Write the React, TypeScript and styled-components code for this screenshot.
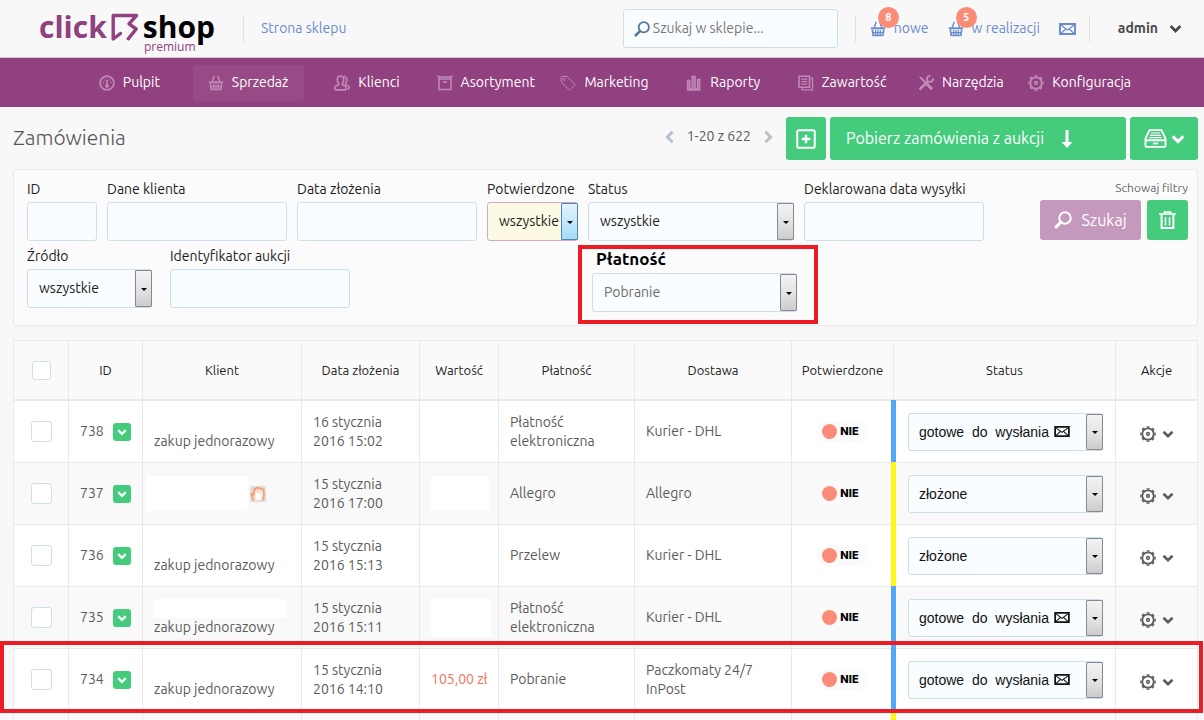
import React from 'react';
import styled, { createGlobalStyle, css } from 'styled-components';

const colors = {
  purple: '#914080',
  purpleActive: '#974a86',
  purpleSoft: '#c598bd',
  green: '#44cb7c',
  coral: '#fa8b76',
  link: '#6a8ccb',
  text: '#5b5b5b',
  border: '#e9e9e9',
  fieldBorder: '#cfdeec',
  fieldBg: '#f9fdff',
  mark: '#ed1c24',
};

const GlobalStyle = createGlobalStyle`
  * { box-sizing: border-box; }
  html { scrollbar-width: none; }
  body {
    margin: 0;
    background: #f8f8f8;
    color: ${colors.text};
    font-family: "Ubuntu", "Noto Sans", sans-serif;
    font-size: 14px;
    line-height: 19px;
  }
  button, input, select { font: inherit; color: inherit; }
  button { cursor: pointer; border: 0; padding: 0; background: none; }
  a { color: inherit; text-decoration: none; }
  svg { display: block; flex: none; }
`;

/* ---------- icons ---------- */

type IconProps = { size?: number; color?: string };

const Icon = ({ size = 16, color = 'currentColor', children }: IconProps & { children: React.ReactNode }) => (
  <svg width={size} height={size} viewBox="0 0 16 16" fill="none" stroke={color} strokeWidth="1.5" aria-hidden="true">
    {children}
  </svg>
);

const GaugeIcon = () => (
  <Icon>
    <circle cx="8" cy="8" r="6.900" strokeWidth="1.700" />
    <path d="M8 5v5" strokeWidth="1.600" />
    <circle cx="8" cy="10.900" r="1.900" fill="currentColor" stroke="none" />
    <path d="M3.400 7.600h1.300M11.300 7.600h1.300M4.800 4.600l.9.8M11.200 4.600l-.9.8M8 3.200v1" strokeWidth="1.200" />
  </Icon>
);
const BasketIcon = () => (
  <Icon>
    <path d="M.800 7.300h14.400" strokeWidth="2" />
    <path d="M2.300 8.500l.9 6h9.600l.9-6" strokeWidth="1.700" />
    <path d="M4.100 7L6.300.8M11.900 7L9.700.8" strokeWidth="1.400" />
    <path d="M5.700 9v5M8 9v5M10.300 9v5M3 11.600h10" strokeWidth="1.200" />
  </Icon>
);
const UsersIcon = () => (
  <Icon>
    <path d="M6.500 1.100c2.200 0 3.300 1.500 3.300 3.700 0 1.800-.6 3-1.300 3.800v1.100l2.600 1.300c.9.500 1.200 1.200 1.200 2.100 0 1-.6 1.700-1.600 1.700H2.400c-1 0-1.600-.7-1.600-1.700 0-.9.3-1.600 1.200-2.100l2.600-1.300V8.600C3.900 7.800 3.200 6.600 3.200 4.800c0-2.200 1.100-3.700 3.300-3.700z" strokeWidth="1.700" />
    <path d="M10 1.200c1.900.2 2.900 1.600 2.900 3.600 0 1.700-.6 2.900-1.300 3.700v.8l2.300 1.300c.8.400 1.200 1.100 1.200 2 0 1-.5 1.900-1.500 1.900" strokeWidth="1.500" />
  </Icon>
);
const BoxIcon = () => (
  <Icon>
    <path d="M.3.600l1.900 1.500h11.600L15.700.600M2 2.200v12.400h12V2.200M1.200 4h13.600" />
    <path d="M6 7h4" strokeWidth="1.600" />
  </Icon>
);
const TagIcon = () => (
  <Icon>
    <path d="M1.200 2.600c0-.8.500-1.300 1.300-1.300l4.600.2 7.500 7.400c.4.400.4.900 0 1.300l-4.400 4.400c-.4.400-.9.400-1.300 0L1.400 7.200z" strokeWidth="1" />
    <circle cx="4.300" cy="4.400" r="1" strokeWidth="1" />
  </Icon>
);
const BarsIcon = () => (
  <Icon>
    <path d="M1.500 5.500h2.300v8h2.300V1.500h3v12h2.400v-9h2.300V15H1.500z" fill="currentColor" fillOpacity=".7" strokeWidth="1.300" />
  </Icon>
);
const PagesIcon = () => (
  <Icon>
    <path d="M1 1.200h10.500v11H1z" />
    <path d="M12.500 3.500h2v11.300H4.200v-2" strokeWidth="1.300" />
    <path d="M3.300 4.200h6M3.300 6.700h6M3.300 9.200h6" strokeWidth="1.200" />
  </Icon>
);
const ToolsIcon = () => (
  <Icon>
    <path d="M1 1.600l2.500.6 10.800 10.600-1.300 1.500L2.200 3.700z" fill="currentColor" stroke="none" />
    <path d="M9 9l5 5.200" strokeWidth="3" />
    <path d="M1.500 14.500l9-8.700" strokeWidth="2.600" />
    <path d="M14.900 3.200a3 3 0 1 1-2.500-2.300" strokeWidth="1.900" />
  </Icon>
);
const GearIcon = () => (
  <Icon>
    <circle cx="8" cy="8" r="5.700" strokeWidth="1.800" />
    <circle cx="8" cy="8" r="7.100" strokeWidth="1.400" strokeDasharray="3.200 2.376" strokeDashoffset="1.600" />
    <circle cx="8" cy="8" r="1.400" strokeWidth="1.500" />
  </Icon>
);
const SearchIcon = ({ size = 16 }: IconProps) => (
  <Icon size={size}>
    <circle cx="9.800" cy="6.200" r="5.100" strokeWidth="1.800" />
    <path d="M6.200 9.900L1 15" strokeWidth="2.600" />
  </Icon>
);
const ChevronIcon = ({ size = 12, dir = 'down' }: IconProps & { dir?: 'down' | 'left' | 'right' }) => {
  const d = { down: 'M2 5l6 6 6-6', left: 'M11 2L5 8l6 6', right: 'M5 2l6 6-6 6' }[dir];
  return (
    <Icon size={size}>
      <path d={d} strokeWidth="3.400" />
    </Icon>
  );
};
const EnvelopeIcon = ({ size = 16 }: IconProps) => (
  <svg width={size + 1} height={size - 4} viewBox="0 0 17 12" fill="none" stroke="currentColor" aria-hidden="true">
    <path d="M1 1h15v10H1z" strokeWidth="1.900" />
    <path d="M2 2l6.500 5L15 2M2.200 10.200l4.300-4M14.800 10.200l-4.300-4" strokeWidth="1.200" />
  </svg>
);
const PlusBoxIcon = () => (
  <Icon size={20}>
    <rect x="1" y="1" width="14" height="14" rx="1.500" strokeWidth="1.600" />
    <path d="M8 4.600v6.800M4.600 8h6.800" strokeWidth="1.900" />
  </Icon>
);
const ArrowDownIcon = () => (
  <svg width="12" height="18" viewBox="0 0 12 18" fill="currentColor" aria-hidden="true">
    <path d="M4.500 0h3v12H11.500L6 18 .5 12h4z" />
  </svg>
);
const DrawerIcon = () => (
  <svg width="23" height="19" viewBox="0 0 23 19" fill="none" stroke="currentColor" aria-hidden="true">
    <path d="M5.500 1.100h12l4 8.400v7.200c0 .7-.5 1.200-1.200 1.200H2.700c-.7 0-1.200-.5-1.200-1.200V9.500z" strokeWidth="1.900" />
    <path d="M1.500 11.300h20" strokeWidth="2" />
    <path d="M7 4h9M6 6.300h11M5.200 8.600h12.600" strokeWidth="1.200" />
    <path d="M9 14.500h5" strokeWidth="1.800" />
  </svg>
);
const TrashIcon = () => (
  <svg width="17" height="18" viewBox="0 0 17 18" fill="none" stroke="currentColor" aria-hidden="true">
    <path d="M0 3h17M5.500 2.500V1h6v1.500" strokeWidth="1.700" />
    <path d="M2.600 3.500V17h11.800V3.500" strokeWidth="2" />
    <path d="M6.500 6v8.500M10.500 6v8.500" strokeWidth="1.500" />
  </svg>
);
const AllegroIcon = () => (
  <svg width="16" height="16" viewBox="0 0 16 16" aria-label="Allegro">
    <rect width="16" height="16" rx="1.500" fill="#dedede" />
    <path
      d="M4 14.500C2.600 13 2.200 11.200 2.400 9.800L1.400 8.600c-.4-.8.500-1.500 1.200-.9l1.300 1L3.700 4.200c0-1 1-1.400 1.500-.7C5.400 1.700 7 1.400 7.500 2.300c.5-1 2.200-.8 2.500.3.700-.7 2-.2 2 .9.900-.5 1.900.1 1.800 1.200-.2 3.300 1.100 6.700-1.500 9.800"
      fill="#f6e4d8"
      stroke="#fb9a63"
      strokeWidth="1.500"
    />
    <path d="M5.500 8c1-1.500 4-1.500 5.500.5v5H6z" fill="#fff" />
  </svg>
);
const LogoMark = () => (
  <svg width="28" height="29" viewBox="0 0 28 29" fill="none" stroke={colors.purple} strokeWidth="3.400" strokeLinejoin="round" strokeLinecap="round" aria-hidden="true">
    <path d="M9.500 20.500L2.200 26V2.500h23.300l-7.500 8.300 7.200 5.200-8 9.800" />
  </svg>
);

/* ---------- top bar ---------- */

const TopBar = styled.header`
  display: flex;
  align-items: center;
  height: 58px;
  padding: 0 22px 0 39px;
  border-bottom: 1px solid #d9c9d6;
`;
const Logo = styled.a`
  position: relative;
  display: flex;
  align-items: center;
  gap: 4px;
  width: 204px;
  padding-bottom: 3px;
  font-family: "Open Sans", "Noto Sans", sans-serif;
  font-size: 30px;
  line-height: 44px;
  font-weight: 700;
  color: #000;
`;
const LogoClick = styled.span`
  color: ${colors.purple};
`;
const LogoTag = styled.span`
  position: absolute;
  left: 105px;
  bottom: -2px;
  font-size: 12px;
  line-height: 14px;
  font-weight: 400;
  color: ${colors.purple};
`;
const Divider = styled.span`
  width: 1px;
  height: 27px;
  background: #e2e2e2;
`;
const TopLink = styled.a<{ $left: number }>`
  position: relative;
  display: flex;
  align-items: center;
  gap: 8px;
  margin-left: ${(p) => p.$left}px;
  color: ${colors.link};
  white-space: nowrap;
`;
const Count = styled.span`
  position: absolute;
  left: 8px;
  top: -12px;
  width: 21px;
  height: 21px;
  border-radius: 50%;
  background: ${colors.coral};
  color: #fff;
  font-size: 11px;
  line-height: 21px;
  font-weight: 700;
  text-align: center;
`;
const SearchBox = styled.label`
  display: flex;
  align-items: center;
  gap: 3px;
  width: 215px;
  height: 39px;
  margin: 0 17px 0 auto;
  padding: 0 10px;
  border: 1px solid ${colors.fieldBorder};
  border-radius: 3px;
  background: ${colors.fieldBg};
  color: #5a7890;
`;
const SearchInput = styled.input`
  flex: 1;
  min-width: 0;
  border: 0;
  padding: 0;
  outline: 0;
  background: transparent;
  &::placeholder { color: #7a7a7a; opacity: 1; }
`;
const UserButton = styled.button`
  display: flex;
  align-items: center;
  gap: 11px;
  margin-left: 28px;
  color: #4a4a4a;
  font-weight: 700;
`;

/* ---------- navigation ---------- */

const Nav = styled.nav`
  display: grid;
  grid-template-columns: repeat(9, minmax(0, 1fr));
  align-items: center;
  height: 49px;
  padding: 0 65px 0 70px;
  background: ${colors.purple};
`;
const NavItem = styled.a<{ $active?: boolean }>`
  justify-self: center;
  display: flex;
  align-items: center;
  gap: 8px;
  height: 36px;
  padding: 0 15px;
  border-radius: 4px;
  color: #fff;
  white-space: nowrap;
  background: ${(p) => (p.$active ? colors.purpleActive : 'transparent')};
  svg { color: #c08ab6; }
`;

/* ---------- page heading ---------- */

const Main = styled.main`
  padding: 10px 6px 0 13px;
`;
const Heading = styled.div`
  display: flex;
  align-items: center;
  gap: 4px;
  height: 43px;
`;
const Title = styled.h1`
  flex: 1;
  margin: 0;
  padding-bottom: 4px;
  font-size: 21px;
  line-height: 24px;
  font-weight: 300;
  color: #555;
`;
const Pager = styled.div`
  display: flex;
  align-items: center;
  gap: 10px;
  margin-right: 7px;
  padding-bottom: 4px;
`;
const PagerButton = styled.button`
  color: #b4c2cc;
`;
const Button = styled.button<{ $w: number; $h: number; $tone?: 'green' | 'soft'; $start?: boolean }>`
  display: flex;
  align-items: center;
  justify-content: ${(p) => (p.$start ? 'flex-start' : 'center')};
  width: ${(p) => p.$w}px;
  height: ${(p) => p.$h}px;
  padding: ${(p) => (p.$start ? '0 16px' : '0')};
  border-radius: 3px;
  background: ${(p) => (p.$tone === 'soft' ? colors.purpleSoft : colors.green)};
  color: #fff;
  font-size: 16px;
  gap: ${(p) => (p.$start ? '17px' : p.$tone === 'soft' ? '9px' : '4px')};
  white-space: nowrap;
`;

/* ---------- filters ---------- */

const Filters = styled.form`
  display: flex;
  justify-content: space-between;
  margin-top: 9px;
  padding: 10px 9px 1px 13px;
  border: 1px solid ${colors.border};
  border-radius: 3px;
  background: #fbfbfb;
`;
const FilterRows = styled.div`
  display: flex;
  flex-direction: column;
  gap: 6px;
`;
const FilterRow = styled.div<{ $gap: number }>`
  display: flex;
  align-items: flex-start;
  gap: ${(p) => p.$gap}px;
`;
const Field = styled.label<{ $w: number; $strong?: boolean }>`
  display: flex;
  flex-direction: column;
  width: ${(p) => p.$w}px;
  gap: ${(p) => (p.$strong ? 5 : 3)}px;
  color: #1c1c1c;
  white-space: nowrap;
`;
const StrongLabel = styled.span`
  padding-left: 4px;
  font-size: 17px;
  font-weight: 700;
  color: #000;
`;
const fieldBox = css`
  width: 100%;
  height: 39px;
  border: 1px solid ${colors.fieldBorder};
  border-radius: 3px;
  background: ${colors.fieldBg};
`;
const TextInput = styled.input`
  ${fieldBox}
  padding: 0 11px;
`;
const SelectWrap = styled.span<{ $hot?: boolean }>`
  position: relative;
  display: block;
  width: 100%;
  &::after {
    content: '';
    position: absolute;
    top: 1px;
    right: 0;
    bottom: 1px;
    width: 15px;
    border: 1px solid ${(p) => (p.$hot ? '#4d84b5' : '#858a90')};
    border-radius: 1px;
    background: ${(p) => (p.$hot ? 'linear-gradient(#e3f4fd, #bde6fb 60%, #a4dcf6)' : 'linear-gradient(#f3f3f3, #e0e0e0 60%, #cccccc)')};
    pointer-events: none;
  }
  &::before {
    content: '';
    position: absolute;
    z-index: 1;
    top: 50%;
    right: 5px;
    margin-top: -1px;
    border: 3px solid transparent;
    border-top-color: #000;
    border-bottom-width: 0;
    pointer-events: none;
  }
`;
const Select = styled.select<{ $hot?: boolean; $muted?: boolean; $cell?: boolean }>`
  ${fieldBox}
  appearance: none;
  display: block;
  padding: 0 15px 0 11px;
  color: ${(p) => (p.$muted ? '#6c6c6c' : '#1c1c1c')};
  ${(p) => p.$hot && css`background: #fdfae3; border-color: #d3a8c9;`}
  ${(p) => p.$cell && css`
    height: 38px;
    padding: 2px 15px 0 10px;
    font-family: "Liberation Sans", Arial, sans-serif;
    color: #111;
  `}
`;
const SelectMail = styled.span`
  position: absolute;
  left: 146px;
  top: 13px;
  color: #111;
  pointer-events: none;
`;
const Marked = styled.div`
  margin: -2px 0 0 210px;
  padding: 0 17px 8px 10px;
  border: 4px solid ${colors.mark};
`;
const FilterActions = styled.div`
  display: flex;
  flex-direction: column;
  align-items: flex-end;
  font-size: 12px;
  line-height: 16px;
`;
const ActionButtons = styled.div`
  display: flex;
  gap: 6px;
  margin-top: 4px;
`;
const HideLink = styled.a`
  color: #666;
`;

/* ---------- orders table ---------- */

const Table = styled.table`
  width: 100%;
  margin-top: 14px;
  table-layout: fixed;
  border-collapse: separate;
  border-spacing: 0;
  border: 1px solid ${colors.border};
  border-bottom: 0;
`;
const HeadCell = styled.th`
  height: 60px;
  padding: 0;
  border-right: 1px solid ${colors.border};
  border-bottom: 2px solid ${colors.border};
  background: #fafafa;
  color: #1c1c1c;
  font-size: 13px;
  font-weight: 400;
  text-align: center;
  &:last-child { border-right: 0; }
`;
const Row = styled.tr<{ $marked?: boolean }>`
  position: relative;
  background: #fff;
  &:nth-child(even) { background: #f9f9f9; }
  ${(p) => p.$marked && css`
    &::after {
      content: '';
      position: absolute;
      z-index: 2;
      inset: -8px -6px -2px -14px;
      border: 4px solid ${colors.mark};
      pointer-events: none;
    }
  `}
`;
const Cell = styled.td<{ $pad?: string }>`
  height: 62px;
  padding: ${(p) => p.$pad ?? '0 4px 0 11px'};
  border-right: 1px solid ${colors.border};
  border-bottom: 1px solid ${colors.border};
  text-align: left;
  &:last-child { border-right: 0; }
`;
const StatusCell = styled(Cell)<{ $stripe: string }>`
  position: relative;
  &::before {
    content: '';
    position: absolute;
    left: -3px;
    top: -1px;
    bottom: 0;
    width: 5px;
    background: ${(p) => p.$stripe};
  }
`;
const Checkbox = styled.input<{ $s: number }>`
  appearance: none;
  display: block;
  width: ${(p) => p.$s}px;
  height: ${(p) => p.$s}px;
  margin: 0 auto;
  border: 1px solid ${colors.fieldBorder};
  border-radius: 3px;
  background: #fff;
`;
const Inline = styled.span<{ $gap: number }>`
  display: flex;
  align-items: center;
  gap: ${(p) => p.$gap}px;
`;
const Expand = styled.button`
  display: flex;
  align-items: center;
  justify-content: center;
  width: 18px;
  height: 18px;
  border-radius: 3px;
  background: ${colors.green};
  color: #fff;
`;
const Blank = styled.span<{ $w: number; $h: number }>`
  display: block;
  width: ${(p) => p.$w}px;
  height: ${(p) => p.$h}px;
  background: #fff;
`;
const Price = styled.span`
  color: #f8705a;
  white-space: nowrap;
`;
const Pill = styled.span`
  display: flex;
  align-items: center;
  gap: 3px;
  width: max-content;
  height: 21px;
  margin: 0 auto;
  padding: 0 9px 0 5px;
  border-radius: 10px;
  background: #fafafa;
  color: #000;
  font-family: Inter, "Noto Sans", sans-serif;
  font-size: 11px;
  font-weight: 800;
`;
const Dot = styled.span`
  width: 15px;
  height: 15px;
  border-radius: 50%;
  background: ${colors.coral};
`;
const ActionButton = styled.button`
  display: flex;
  align-items: center;
  gap: 6px;
  margin: 4px auto 0;
  color: #5b5b5b;
`;

const navItems: { label: string; icon: React.ReactNode; active?: boolean }[] = [
  { label: 'Pulpit', icon: <GaugeIcon /> },
  { label: 'Sprzedaż', icon: <BasketIcon />, active: true },
  { label: 'Klienci', icon: <UsersIcon /> },
  { label: 'Asortyment', icon: <BoxIcon /> },
  { label: 'Marketing', icon: <TagIcon /> },
  { label: 'Raporty', icon: <BarsIcon /> },
  { label: 'Zawartość', icon: <PagesIcon /> },
  { label: 'Narzędzia', icon: <ToolsIcon /> },
  { label: 'Konfiguracja', icon: <GearIcon /> },
];

const columnWidths = [55, 74, 159, 118, 79, 136, 157, 102, 222, 81];
const columnNames = ['ID', 'Klient', 'Data złożenia', 'Wartość', 'Płatność', 'Dostawa', 'Potwierdzone', 'Status', 'Akcje'];

const oneTime = 'zakup jednorazowy';
const ready = 'gotowe\u00a0 do\u00a0 wysłania';

type Order = {
  id: number;
  client: React.ReactNode;
  clientPad?: string;
  day: string;
  time: string;
  value?: React.ReactNode;
  payment: string;
  delivery: string;
  ready: boolean;
  stripe: string;
  marked?: boolean;
};

const blue = '#52a8f7';
const yellow = '#fff714';

const orders: Order[] = [
  { id: 738, client: <><br />{oneTime}</>, day: '16 stycznia', time: '15:02', payment: 'Płatność elektroniczna', delivery: 'Kurier - DHL', ready: true, stripe: blue },
  {
    id: 737,
    client: <Inline $gap={2}><Blank $w={102} $h={35} /><AllegroIcon /></Inline>,
    clientPad: '0 0 0 3px',
    day: '15 stycznia', time: '17:00', value: <Blank $w={58} $h={35} />, payment: 'Allegro', delivery: 'Allegro', ready: false, stripe: yellow,
  },
  { id: 736, client: <><br />{oneTime}</>, day: '15 stycznia', time: '15:13', payment: 'Przelew', delivery: 'Kurier - DHL', ready: false, stripe: yellow },
  {
    id: 735, client: <><Blank $w={132} $h={19} />{oneTime}</>,
    day: '15 stycznia', time: '15:11', value: <Blank $w={60} $h={38} />, payment: 'Płatność elektroniczna', delivery: 'Kurier - DHL', ready: true, stripe: blue,
  },
  { id: 734, client: <><br />{oneTime}</>, day: '15 stycznia', time: '14:10', value: <Price>105,00 zł</Price>, payment: 'Pobranie', delivery: 'Paczkomaty 24/7 InPost', ready: true, stripe: blue, marked: true },
];

const OrderRow = ({ order }: { order: Order }) => (
  <Row $marked={order.marked}>
    <Cell $pad="0"><Checkbox $s={21} type="checkbox" aria-label={`Zaznacz ${order.id}`} /></Cell>
    <Cell>
      <Inline $gap={9}>
        {order.id}
        <Expand type="button" aria-label={`Rozwiń ${order.id}`}><ChevronIcon size={10} /></Expand>
      </Inline>
    </Cell>
    <Cell $pad={order.clientPad}>{order.client}</Cell>
    <Cell>{order.day}<br />2016 {order.time}</Cell>
    <Cell $pad="0 0 0 11px">{order.value}</Cell>
    <Cell $pad="0 30px 0 11px">{order.payment}</Cell>
    <Cell $pad="0 30px 0 11px">{order.delivery}</Cell>
    <Cell $pad="0"><Pill><Dot />NIE</Pill></Cell>
    <StatusCell $pad="0 12px 0 14px" $stripe={order.stripe}>
      <SelectWrap>
        <Select $cell aria-label={`Status ${order.id}`}>
          <option>{order.ready ? ready : 'złożone'}</option>
        </Select>
        {order.ready && <SelectMail><EnvelopeIcon size={15} /></SelectMail>}
      </SelectWrap>
    </StatusCell>
    <Cell $pad="0">
      <ActionButton type="button" aria-label={`Akcje ${order.id}`}><GearIcon /><ChevronIcon /></ActionButton>
    </Cell>
  </Row>
);

const SelectField = ({ label, value, width, hot, muted, strong }: { label: string; value: string; width: number; hot?: boolean; muted?: boolean; strong?: boolean }) => (
  <Field $w={width} $strong={strong}>
    {strong ? <StrongLabel>{label}</StrongLabel> : label}
    <SelectWrap $hot={hot}>
      <Select $hot={hot} $muted={muted}><option>{value}</option></Select>
    </SelectWrap>
  </Field>
);
const TextField = ({ label, width }: { label: string; width: number }) => (
  <Field $w={width}>{label}<TextInput type="text" /></Field>
);

export default function App() {
  return (
    <>
      <GlobalStyle />
      <TopBar>
        <Logo href="#">
          <LogoClick>click</LogoClick>
          <LogoMark />
          <span>shop</span>
          <LogoTag>premium</LogoTag>
        </Logo>
        <Divider />
        <TopLink href="#" $left={17}>Strona sklepu</TopLink>
        <SearchBox>
          <SearchIcon />
          <SearchInput type="search" placeholder="Szukaj w sklepie..." aria-label="Szukaj w sklepie" />
        </SearchBox>
        <Divider />
        <TopLink href="#" $left={14}><BasketIcon /><Count>8</Count>nowe</TopLink>
        <TopLink href="#" $left={19}><BasketIcon /><Count>5</Count>w realizacji</TopLink>
        <TopLink href="#" $left={19} aria-label="Wiadomości"><EnvelopeIcon /></TopLink>
        <TopLink as="span" $left={13}><Divider /></TopLink>
        <UserButton type="button">admin <ChevronIcon size={13} /></UserButton>
      </TopBar>

      <Nav>
        {navItems.map((item) => (
          <NavItem key={item.label} href="#" $active={item.active}>{item.icon}{item.label}</NavItem>
        ))}
      </Nav>

      <Main>
        <Heading>
          <Title>Zamówienia</Title>
          <Pager>
            <PagerButton type="button" aria-label="Poprzednia strona"><ChevronIcon size={14} dir="left" /></PagerButton>
            1-20 z 622
            <PagerButton type="button" aria-label="Następna strona"><ChevronIcon size={14} dir="right" /></PagerButton>
          </Pager>
          <Button type="button" $w={40} $h={43} aria-label="Dodaj"><PlusBoxIcon /></Button>
          <Button type="button" $w={296} $h={43} $start>Pobierz zamówienia z aukcji <ArrowDownIcon /></Button>
          <Button type="button" $w={68} $h={43} aria-label="Więcej"><DrawerIcon /><ChevronIcon size={14} /></Button>
        </Heading>

        <Filters>
          <FilterRows>
            <FilterRow $gap={10}>
              <TextField label="ID" width={70} />
              <TextField label="Dane klienta" width={180} />
              <TextField label="Data złożenia" width={180} />
              <SelectField label="Potwierdzone" value="wszystkie" width={91} hot />
              <SelectField label="Status" value="wszystkie" width={206} />
              <TextField label="Deklarowana data wysyłki" width={180} />
            </FilterRow>
            <FilterRow $gap={18}>
              <SelectField label="Źródło" value="wszystkie" width={125} />
              <TextField label="Identyfikator aukcji" width={180} />
              <Marked>
                <SelectField label="Płatność" value="Pobranie" width={205} muted strong />
              </Marked>
            </FilterRow>
          </FilterRows>
          <FilterActions>
            <HideLink href="#">Schowaj filtry</HideLink>
            <ActionButtons>
              <Button type="submit" $w={101} $h={40} $tone="soft"><SearchIcon size={18} />Szukaj</Button>
              <Button type="button" $w={41} $h={40} aria-label="Wyczyść filtry"><TrashIcon /></Button>
            </ActionButtons>
          </FilterActions>
        </Filters>

        <Table>
          <colgroup>{columnWidths.map((w, i) => <col key={i} width={w} />)}</colgroup>
          <thead>
            <tr>
              <HeadCell><Checkbox $s={19} type="checkbox" aria-label="Zaznacz wszystkie" /></HeadCell>
              {columnNames.map((name) => <HeadCell key={name} scope="col">{name}</HeadCell>)}
            </tr>
          </thead>
          <tbody>
            {orders.map((order) => <OrderRow key={order.id} order={order} />)}
            <Row>
              {columnNames.slice(0, 8).map((name) => <Cell key={name} />)}
              <StatusCell $stripe={yellow} />
              <Cell />
            </Row>
          </tbody>
        </Table>
      </Main>
    </>
  );
}
